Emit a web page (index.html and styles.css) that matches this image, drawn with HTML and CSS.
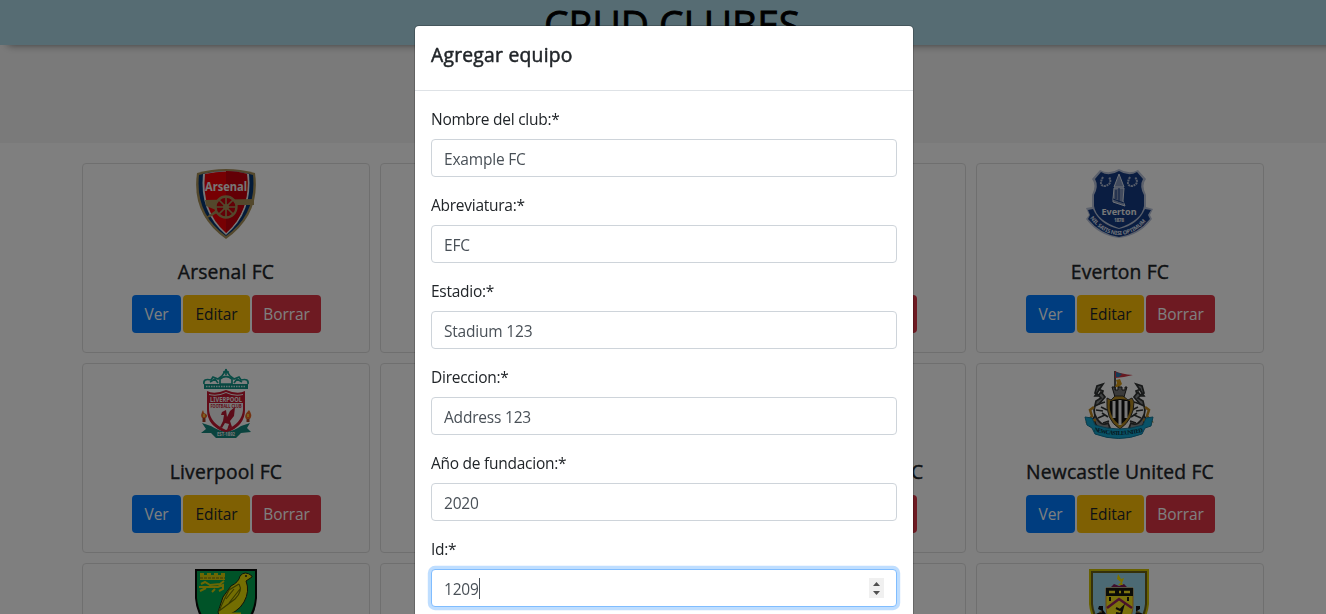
FILE: index.html
```html
<!DOCTYPE html>
<html lang="es">
<head>
<meta charset="utf-8">
<title>CRUD Clubes</title>
<link rel="stylesheet" href="styles.css">
</head>
<body>
<header class="site-header"><h1 class="site-title">CRUD CLUBES</h1></header>
<section class="toolbar"></section>
<main class="clubs">
  <article class="card">
    <svg class="crest" viewBox="0 0 92 90">
      <path d="M17 13Q46 5 75 13Q81 54 46 79Q11 54 17 13Z" fill="#a79059"/>
      <path d="M19 15Q46 7 73 15Q77 54 46 76Q15 54 19 15Z" fill="#063672"/>
      <path d="M23 14Q46 8 69 14Q73 52 46 75Q19 52 23 14Z" fill="#eee"/>
      <path d="M25 14Q46 9 67 14Q71 51 46 73Q21 51 25 14Z" fill="#ef0107"/>
      <path d="M46 11Q58 11 67 14Q71 51 46 73Z" fill="#c7000c"/>
      <path d="M25 40L74 39V45L58 45L35 54Q30 58 25 58L36 50L26 46Z" fill="#a79059"/>
      <circle cx="46" cy="47" r="10.5" fill="#c7000c" stroke="#a79059" stroke-width="2.3"/>
      <path d="M46 37V57M36 47H56M39 40L53 54M53 40L39 54" stroke="#a79059" stroke-width="1.7"/>
      <circle cx="46" cy="47" r="3" fill="#a79059"/>
      <text x="46" y="30.500" class="crest-word" font-size="12" textLength="42" lengthAdjust="spacingAndGlyphs">Arsenal</text>
    </svg>
    <h5 class="name">Arsenal FC</h5>
    <div class="actions"><button class="btn view">Ver</button><button class="btn edit">Editar</button><button class="btn delete">Borrar</button></div>
  </article>
  <article class="card"></article>
  <article class="card">
    <div class="crest"></div><h5 class="name">Chelsea FC</h5>
    <div class="actions"><button class="btn view">Ver</button><button class="btn edit">Editar</button><button class="btn delete">Borrar</button></div>
  </article>
  <article class="card">
    <svg class="crest" viewBox="0 0 92 90">
      <path d="M26 10Q35 15 45 9Q55 15 64 10L72 19Q67 25 72 35V47L79 49L76 55L78 59Q65 76 45 78Q25 76 12 59L15 55L12 48L18 47V35Q23 25 18 19Z" fill="#b8c2d8"/>
      <path d="M27 12Q35 17 45 11Q55 17 63 12L69 19Q65 26 70 35V46Q68 60 45 68Q22 60 20 46V35Q25 26 21 19Z" fill="#143b83"/>
      <path d="M14 50L19 49Q26 65 45 69Q64 65 71 49L77 50L74 55L76 59Q64 74 45 77Q26 74 14 59L16 55Z" fill="#143b83"/>
      <path d="M29 17Q24 26 31 26Q39 24 35 17M56 17Q51 26 58 26Q66 24 61 17" fill="none" stroke="#a9b6d0" stroke-width="2" stroke-dasharray="2 .7"/>
      <path d="M45 14L40 27H50ZM40 28H50L49 41L51 46L39 42V39Z" fill="#8497bd" stroke="#dce3ef" stroke-width="1"/>
      <path d="M42 30V39M45 28V42M39 39L50 43" stroke="#143b83"/>
      <text x="45" y="55" class="crest-word" font-size="9" textLength="35" lengthAdjust="spacingAndGlyphs">Everton</text>
      <text x="45" y="62" class="crest-word" font-size="5" textLength="10">1878</text>
      <path id="everton-motto" d="M16 58Q29 75 45 75Q61 75 75 58" fill="none"/>
      <text class="crest-motto" font-size="5.5"><textPath href="#everton-motto" textLength="66">NIL SATIS NISI OPTIMUM</textPath></text>
    </svg>
    <h5 class="name">Everton FC</h5>
    <div class="actions"><button class="btn view">Ver</button><button class="btn edit">Editar</button><button class="btn delete">Borrar</button></div>
  </article>

  <article class="card">
    <svg class="crest" viewBox="0 -2 92 90">
      <path d="M24 22Q23 16 31 18L33 15L38 17L42 14L46 8L50 14L54 17L59 15L61 18Q69 16 68 22" fill="none" stroke="#16988c" stroke-width="1.7"/>
      <path d="M40 17Q46 12 52 17V22H40ZM46 7V13M43 10H49M30 20L35 17L38 21M62 20L57 17L54 21" fill="none" stroke="#16988c" stroke-width="1.7"/>
      <path d="M24 22H68V27H24Z" fill="#128e83"/>
      <path d="M26 24.500H66" stroke="#c6e8e4" stroke-width="1.6" stroke-dasharray="1.5 1"/>
      <path d="M27 29Q34 33 46 28Q58 33 65 29V48Q65 64 46 71Q27 64 27 48Z" fill="#c51830"/>
      <path d="M29 32Q38 34 46 30Q54 34 63 32V48Q62 61 46 68Q30 61 29 48Z" fill="#eee"/>
      <path d="M29 33Q38 35 46 31Q54 35 63 33V41H29Z" fill="#c51830"/>
      <text x="46" y="40" class="crest-word" font-size="7" textLength="32" lengthAdjust="spacingAndGlyphs">LIVERPOOL</text>
      <text x="46" y="45.500" class="crest-word red" font-size="4.5" textLength="31" lengthAdjust="spacingAndGlyphs">FOOTBALL CLUB</text>
      <path d="M42 50L46 48L47 55L50 49L55 45L54 54L50 59L52 65L47 68L49 62L45 61L42 66L40 65L43 59L44 53L41 53Z" fill="#b91830"/>
      <path d="M22 61L31 64Q39 69 46 70Q54 69 61 64L70 61L67 66L71 70L61 71L56 76H36L31 71L21 71L26 67Z" fill="#14877c"/>
      <path d="M24 60V53M68 60V53" stroke="#a33f22" stroke-width="3"/>
      <path d="M23 48Q20 53 22 56H26Q29 53 24 51ZM69 48Q63 54 66 57H70Q73 53 69 48Z" fill="#e96624"/>
      <path d="M24 52V55M68 52V55" stroke="#f8bc38" stroke-width="2"/>
      <text x="46" y="74" class="crest-word" font-size="5" textLength="18" lengthAdjust="spacingAndGlyphs">EST·1892</text>
    </svg>
    <h5 class="name">Liverpool FC</h5>
    <div class="actions"><button class="btn view">Ver</button><button class="btn edit">Editar</button><button class="btn delete">Borrar</button></div>
  </article>
  <article class="card"></article>
  <article class="card">
    <div class="crest"></div><h5 class="name">Manchester United FC</h5>
    <div class="actions"><button class="btn view">Ver</button><button class="btn edit">Editar</button><button class="btn delete">Borrar</button></div>
  </article>
  <article class="card">
    <svg class="crest" viewBox="0 -2 92 90">
      <path d="M41 9V35" stroke="#222" stroke-width="1.5"/>
      <path d="M41 9Q47 12 59 13L50 15L41 16Z" fill="#cf3445"/><path d="M42 10L48 12L45 15H42Z" fill="#2a76ae"/>
      <path d="M42 18L46 17L48 22L45 25H41L43 21Z" fill="#d69b16"/>
      <path d="M38 25H41V28H44V25H48V28H51V25H53L50 35H41Z" fill="#777" stroke="#222"/>
      <g id="sea-horse">
        <path d="M29 22L23 24L21 31L25 33L27 30L31 35L25 42L21 44Q19 50 22 55Q27 65 34 61L36 66L29 68Q21 64 21 60L17 59L21 54L20 48L22 39L27 36L25 34L21 34Z" fill="#85888a" stroke="#303332" stroke-width="1.7"/>
        <path d="M24 27L29 29L28 32M25 42L31 40M22 48L29 49M24 56L31 53M29 61L35 59M27 45L33 48M28 51L34 55" stroke="#303332" stroke-width="1.7" fill="none"/>
        <path d="M20 45L16 48L18 54L14 59L22 58" fill="none" stroke="#bd8720" stroke-width="2.5"/>
      </g>
      <use href="#sea-horse" transform="translate(91 0) scale(-1 1)"/>
      <path d="M33 36L37 38L41 34H49L54 38L58 36L60 40Q60 57 46 67Q31 58 33 36Z" fill="#b58b22" stroke="#333" stroke-width="1"/>
      <path d="M36 39Q46 35 56 39Q58 55 46 63Q34 55 36 39Z" fill="#111"/>
      <path d="M40 39V56M46 38V63M52 39V56" stroke="#eee" stroke-width="3"/>
      <path d="M11 55L18 56L21 63Q45 71 69 63L72 56L79 55L77 64L71 66L68 72Q45 81 21 72L18 66L13 63Z" fill="#12a5cf" stroke="#167899" stroke-width="1"/>
      <path id="newcastle-name" d="M20 69Q45 77 71 69" fill="none"/>
      <text class="crest-motto dark" font-size="6"><textPath href="#newcastle-name" textLength="50">NEWCASTLE UNITED</textPath></text>
    </svg>
    <h5 class="name">Newcastle United FC</h5>
    <div class="actions"><button class="btn view">Ver</button><button class="btn edit">Editar</button><button class="btn delete">Borrar</button></div>
  </article>

  <article class="card">
    <svg class="crest" viewBox="0 0 92 90">
      <path d="M15 9H77V38Q75 66 46 79Q17 66 15 38Z" fill="#080b08"/>
      <path d="M17 11H75V38Q73 63 46 76Q19 63 17 38Z" fill="#00a650"/>
      <path d="M20 13H24V15H27V13H31V15H34V13H38V15H41V13H45V20H20Z" fill="#d8cf08"/>
      <path d="M20 18H45" stroke="#746f08" stroke-width="1" stroke-dasharray="3 1"/>
      <path d="M21 24L25 22L30 25L40 24L44 21M24 27L38 27L43 25L43 29L39 31M26 28L20 31M35 29L32 32M19 27H25" fill="none" stroke="#d8cf08" stroke-width="2"/>
      <path d="M72 16Q65 10 60 16Q59 22 51 26L43 37L38 52L40 58Q58 53 64 42Q70 31 66 21L72 17Z" fill="#e7dc05" stroke="#242913" stroke-width="1"/>
      <path d="M59 24L49 30L44 40L39 51L55 39Q63 31 59 24M54 29L46 39M60 29L49 43" fill="none" stroke="#717400" stroke-width="1.2"/>
      <circle cx="66" cy="16" r="1" fill="#222"/>
      <path d="M47 54H61" stroke="#e7dc05" stroke-width="3"/>
    </svg>
  </article>
  <article class="card"></article>
  <article class="card"></article>
  <article class="card">
    <svg class="crest" viewBox="0 0 92 90">
      <path d="M15 9H75V44Q73 68 45 79Q17 68 15 44Z" fill="#d0c300"/>
      <path d="M17 11H73V44Q71 67 45 77Q19 67 17 44Z" fill="#6a6117"/>
      <path d="M19 13H71V44Q69 65 45 75Q21 65 19 44Z" fill="#98d4e9"/>
      <path d="M37 27L40 24L45 26L50 24L53 27Z" fill="#811d54"/>
      <path d="M44 25L47 22L43 19L44 14L47 19L50 18L48 23L49 25Z" fill="#f4e300"/>
      <path d="M32 28H59V48Q58 60 45 66Q32 60 32 48Z" fill="#f5e51a" stroke="#cd8b31" stroke-width="1"/>
      <path d="M32 28H59V36H32Z" fill="#16180e"/>
      <path d="M35 32H41M45 32H47M50 32H56" stroke="#ffea20" stroke-width="2.4"/>
      <path d="M33 48L45 39L58 48" fill="none" stroke="#98245b" stroke-width="2.5"/>
      <path d="M36 37V41M54 37V41M42 48L46 50L49 47L47 54L42 53" stroke="#1b1b12" stroke-width="2" fill="none"/>
      <path d="M25 46H29V50L32 54V60L22 54L28 51L24 49ZM62 46H66V49L63 51L69 54L60 60L62 52Z" fill="#101010"/>
      <path d="M25 52H28M62 52H66" stroke="#b69335" stroke-width="1"/>
    </svg>
  </article>
</main>
<div class="backdrop">
  <form class="modal">
    <div class="modal-header"><h5 class="modal-title">Agregar equipo</h5></div>
    <div class="modal-body">
      <div class="field"><label for="nombre">Nombre del club:*</label><input id="nombre" value="Example FC"></div>
      <div class="field"><label for="abreviatura">Abreviatura:*</label><input id="abreviatura" value="EFC"></div>
      <div class="field"><label for="estadio">Estadio:*</label><input id="estadio" value="Stadium 123"></div>
      <div class="field"><label for="direccion">Direccion:*</label><input id="direccion" value="Address 123"></div>
      <div class="field"><label for="fundacion">Año de fundacion:*</label><input id="fundacion" value="2020"></div>
      <div class="field"><label>Id:*</label>
        <div class="number-input"><span class="value">1209</span>
          <svg class="spinner" viewBox="0 0 15 20"><path fill="#f0f0f0" d="M0 0H15V20H0Z"/><path fill="#505050" d="M4 8L7.5 4L11 8ZM4 13H11L7.5 17Z"/></svg>
        </div>
      </div>
    </div>
  </form>
</div>
</body>
</html>
```
FILE: styles.css
```css
* { box-sizing: border-box; }
html, body { height: 100%; overflow: hidden; }
body { margin: 0; background: #fff; color: #212529; font: 400 15.5px/24px "Open Sans", "Noto Sans", sans-serif; }
h1, h5 { margin: 0; font-weight: 400; }
.site-header { position: relative; height: 45px; background: #add8e6; box-shadow: 8px 0 8px #777; text-align: center; }
.site-title { padding-left: 18px; color: #000; font-size: 39px; line-height: 47px; letter-spacing: -.1px; -webkit-text-stroke: .8px currentColor; }
.toolbar { height: 98px; background: #f5f5f5; }
.clubs { display: grid; grid-template-columns: repeat(4, 288px); grid-auto-rows: 190px; gap: 10px; height: 471px; padding: 20px 0 0 82px; overflow: hidden; }
.card { display: flex; flex-direction: column; align-items: center; border: 1px solid #dfdfdf; border-radius: 4px; overflow: hidden; }
.crest { display: block; width: 92px; height: 90px; margin-top: -4px; flex: none; }
.crest-word { fill: #eee; font-family: "Noto Sans", sans-serif; font-weight: 700; text-anchor: middle; }
.crest-word.red { fill: #c51830; }
.crest-motto { fill: #e4eaf4; font-family: "Noto Sans", sans-serif; font-weight: 700; }
.crest-motto.dark { fill: #102d38; font-family: "Liberation Serif", serif; }
.name { margin-top: 10px; font-size: 19.3px; line-height: 24px; letter-spacing: .18px; white-space: nowrap; -webkit-text-stroke: .4px currentColor; }
.actions { display: flex; gap: 2px; margin: 11px 0 0 1px; }
.btn { height: 38px; padding: 0; border: 0; border-radius: 4px; color: #fff; font: inherit; letter-spacing: -.1px; }
.view { width: 49px; background: #007bff; }
.edit { width: 67px; background: #ffc107; color: #212529; }
.delete { width: 69px; background: #dc3545; }
.backdrop { position: fixed; inset: 0; padding: 25px 0 0 414px; background: rgba(0, 0, 0, .5); overflow: hidden; }
.modal { width: 500px; height: 720px; border: 1px solid rgba(0, 0, 0, .2); border-radius: 5px; background: #fff; background-clip: padding-box; }
.modal-header { height: 65px; padding: 16px; border-bottom: 1px solid #dee2e6; }
.modal-title { padding-top: 1px; font-size: 19.3px; line-height: 24px; letter-spacing: .25px; -webkit-text-stroke: .5px currentColor; }
.modal-body { padding: 16px; }
.field { margin-bottom: 16px; }
.field label { display: block; margin-bottom: 8px; letter-spacing: -.26px; }
.field input, .number-input { display: flex; align-items: center; width: 100%; height: 38px; padding: 7px 12px 5px; border: 1px solid #ced4da; border-radius: 4px; background: #fff; color: #495057; font: inherit; letter-spacing: -.2px; }
.field .number-input { padding: 6px 12px; border-color: #80bdff; box-shadow: 0 0 0 3.2px rgba(0, 123, 255, .25); }
.value { height: 21px; border-right: 1px solid #495057; line-height: 22px; }
.spinner { width: 15px; height: 20px; margin-left: auto; }
```
